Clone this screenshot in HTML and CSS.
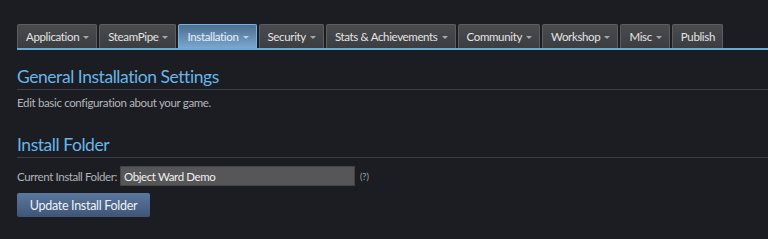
FILE: index.html
```html
<!DOCTYPE html>
<html>
<head>
<meta charset="utf-8">
<link rel="stylesheet" href="styles.css">
</head>
<body>
<div class="page">
  <nav class="tabs">
    <div class="tab">Application <span class="caret"></span></div>
    <div class="tab">SteamPipe <span class="caret"></span></div>
    <div class="tab active">Installation <span class="caret"></span></div>
    <div class="tab">Security <span class="caret"></span></div>
    <div class="tab">Stats &amp; Achievements <span class="caret"></span></div>
    <div class="tab">Community <span class="caret"></span></div>
    <div class="tab">Workshop <span class="caret"></span></div>
    <div class="tab">Misc <span class="caret"></span></div>
    <div class="tab">Publish</div>
  </nav>
  <section class="section">
    <h2 class="heading">General Installation Settings</h2>
    <p class="desc">Edit basic configuration about your game.</p>
  </section>
  <section class="section second">
    <h2 class="heading">Install Folder</h2>
    <div class="field">
      <label class="label">Current Install Folder:</label>
      <div class="input">Object Ward Demo</div>
      <span class="help">(?)</span>
    </div>
    <button class="btn">Update Install Folder</button>
  </section>
</div>
</body>
</html>
```

FILE: styles.css
```css
html, body {
  margin: 0;
  padding: 0;
  background: #1b1d23;
  font-family: Lato, "Noto Sans", sans-serif;
  height: 239px;
  overflow: hidden;
}
.page {
  padding: 24px 0 0 17px;
}
.tabs {
  display: flex;
  gap: 2px;
  border-bottom: 2px solid #67acd9;
  height: 24px;
}
.tab {
  box-sizing: border-box;
  height: 24px;
  padding: 0 7px 0 8px;
  display: flex;
  align-items: center;
  gap: 4px;
  font-size: 11.5px;
  letter-spacing: -0.35px;
  color: #e4e4e4;
  background: linear-gradient(#4a4b4e, #3c3d40);
  border: 1px solid #5c5d60;
  border-bottom: none;
  border-radius: 2px 2px 0 0;
  white-space: nowrap;
}
.tab.active {
  background: linear-gradient(#4d6f92, #7aa6cf);
  border-color: #6cb6e6;
  color: #e6eef6;
}
.caret {
  width: 0;
  height: 0;
  border-left: 3px solid transparent;
  border-right: 3px solid transparent;
  border-top: 3px solid #a7a8aa;
  margin-top: 1px;
}
.tab.active .caret {
  border-top-color: #b8cfe4;
}
.section {
  margin-top: 17px;
}
.second {
  margin-top: 25px;
}
.heading {
  margin: 0;
  font-weight: normal;
  font-size: 17.5px;
  letter-spacing: -0.45px;
  color: #67b6e9;
  line-height: 20px;
  padding-bottom: 2px;
  border-bottom: 1px solid #3b3e45;
}
.desc {
  margin: 6px 0 0;
  font-size: 11.5px;
  letter-spacing: -0.35px;
  line-height: 14px;
  color: #b6b7b9;
}
.field {
  margin-top: 8px;
  display: flex;
  align-items: center;
  gap: 3px;
}
.label {
  font-size: 11.5px;
  letter-spacing: -0.4px;
  color: #b2b3b5;
}
.input {
  box-sizing: border-box;
  width: 235px;
  height: 20px;
  background: #565658;
  border: 1px solid #434345;
  color: #f0f0f0;
  font-size: 11.5px;
  letter-spacing: -0.4px;
  padding: 0 3px;
  display: flex;
  align-items: center;
}
.help {
  font-size: 9px;
  color: #a6a7a9;
  margin-left: 2px;
}
.btn {
  display: block;
  margin-top: 7px;
  box-sizing: border-box;
  width: 133px;
  height: 24px;
  font-family: inherit;
  font-size: 12.5px;
  letter-spacing: -0.3px;
  color: #eef2f7;
  background: linear-gradient(#5b789d, #3f5577);
  border: none;
  border-radius: 2px;
  padding: 0;
}
```
